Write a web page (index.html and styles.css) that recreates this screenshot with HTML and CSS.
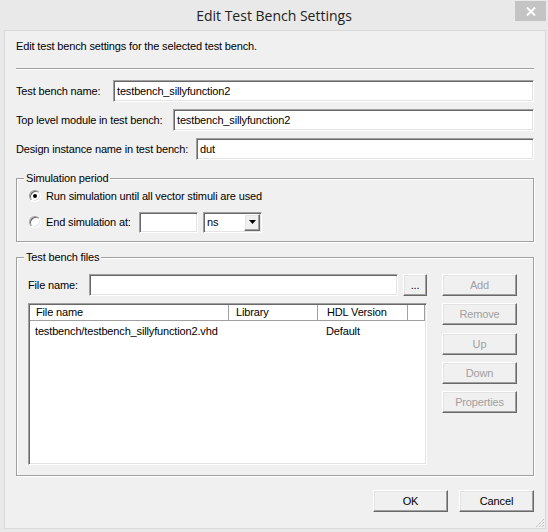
FILE: index.html
```html
<!DOCTYPE html>
<html>
<head>
<meta charset="utf-8">
<title>Edit Test Bench Settings</title>
<link rel="stylesheet" href="styles.css">
</head>
<body>
<div class="window">
  <div class="titlebar">
    <div></div>
    <div class="title">Edit Test Bench Settings</div>
    <div class="close"><svg width="10" height="9" viewBox="0 0 10 9"><path d="M1 0.5 L9 8.5 M9 0.5 L1 8.5" stroke="#fff" stroke-width="2"/></svg></div>
  </div>
  <div class="client">
    <p class="intro">Edit test bench settings for the selected test bench.</p>
    <div class="sep"></div>
    <div class="fields">
      <div class="row"><span class="lbl w1">Test bench name:</span><div class="input sunken">testbench_sillyfunction2</div></div>
      <div class="row"><span class="lbl w2">Top level module in test bench:</span><div class="input sunken">testbench_sillyfunction2</div></div>
      <div class="row"><span class="lbl w3">Design instance name in test bench:</span><div class="input sunken">dut</div></div>
    </div>

    <div class="group sim">
      <div class="group-title">Simulation period</div>
      <div class="sim-body">
        <div class="radio-row">
          <span class="radio sunken-round checked"></span>
          <span>Run simulation until all vector stimuli are used</span>
        </div>
        <div class="radio-row r2">
          <span class="radio sunken-round"></span>
          <span class="end-lbl">End simulation at:</span>
          <div class="input time sunken"></div>
          <div class="select sunken">
            <span class="sel-text">ns</span>
            <span class="drop raised"><svg width="7" height="4" viewBox="0 0 7 4"><path d="M0 0 H7 L3.5 4 Z" fill="#000"/></svg></span>
          </div>
        </div>
      </div>
    </div>

    <div class="group files">
      <div class="group-title">Test bench files</div>
      <div class="files-body">
        <div class="files-left">
          <div class="file-row">
            <span class="lbl fn">File name:</span>
            <div class="input sunken"></div>
            <div class="btn raised dots">...</div>
          </div>
          <div class="listview sunken">
            <div class="lv-header">
              <div class="hcell c1">File name</div>
              <div class="hcell c2">Library</div>
              <div class="hcell c3">HDL Version</div>
              <div class="hcell c4"></div>
            </div>
            <div class="lv-row">
              <div class="cell c1">testbench/testbench_sillyfunction2.vhd</div>
              <div class="cell c2"></div>
              <div class="cell c3">Default</div>
            </div>
          </div>
        </div>
        <div class="files-right">
          <div class="btn raised disabled">Add</div>
          <div class="btn raised disabled">Remove</div>
          <div class="btn raised disabled">Up</div>
          <div class="btn raised disabled">Down</div>
          <div class="btn raised disabled">Properties</div>
        </div>
      </div>
    </div>

    <div class="footer">
      <div class="btn raised dlg">OK</div>
      <div class="btn raised dlg">Cancel</div>
    </div>

    <div class="grip"><svg width="11" height="11" viewBox="0 0 11 11"><path d="M10 2 L2 10 M10 5 L5 10 M10 8 L8 10" stroke="#a8a8a8" stroke-width="1" stroke-dasharray="1 1"/></svg></div>
  </div>
</div>
</body>
</html>
```

FILE: styles.css
```css
* { box-sizing: border-box; }
html, body { margin: 0; padding: 0; }
body {
  width: 548px;
  height: 532px;
  overflow: hidden;
  background: #e9e9e9;
  font-family: "Liberation Sans", Arial, sans-serif;
  font-size: 11px;
  letter-spacing: -0.15px;
  color: #000;
}
.window { display: flex; flex-direction: column; height: 532px; }

.titlebar {
  height: 30px;
  display: grid;
  grid-template-columns: 1fr auto 1fr;
  align-items: start;
}
.title {
  font-family: "Open Sans", sans-serif;
  font-size: 14px;
  letter-spacing: 0;
  color: #222;
  line-height: 20px;
  padding-top: 6px;
}
.close {
  justify-self: end;
  width: 31px;
  height: 20px;
  margin: 1px 2px 0 0;
  background: #c4c4c4;
  display: flex;
  align-items: center;
  justify-content: center;
}

.client {
  position: relative;
  margin: 0 2px 3px 4px;
  height: 499px;
  border: 1px solid #d9d9d9;
  background: #f0f0f0;
  padding: 9px 11px 0 11px;
}
.intro { margin: 0; line-height: 13px; }
.sep {
  margin-top: 15px;
  height: 2px;
  border-top: 1px solid #a0a0a0;
  border-bottom: 1px solid #fff;
}
.fields { margin-top: 10px; }
.row { display: flex; align-items: center; height: 22px; }
.row + .row { margin-top: 7px; }
.lbl { flex: none; line-height: 13px; white-space: nowrap; }
.w1 { width: 97px; }
.w2 { width: 157px; }
.w3 { width: 180px; }

.sunken {
  background: #fff;
  border: 1px solid;
  border-color: #a0a0a0 #fff #fff #a0a0a0;
  box-shadow: inset 1px 1px #696969, inset -1px -1px #e3e3e3;
}
.raised {
  background: #f0f0f0;
  border: 1px solid;
  border-color: #fff #696969 #696969 #fff;
  box-shadow: inset -1px -1px #a0a0a0, inset 1px 1px #e3e3e3;
}
.input {
  flex: 1;
  height: 22px;
  padding: 0 3px;
  line-height: 20px;
  white-space: nowrap;
  overflow: hidden;
}

.group {
  border: 1px solid #a0a0a0;
  box-shadow: inset 1px 1px #fff, 1px 1px #fff;
}
.group-title {
  width: fit-content;
  margin: -7px 0 0 7px;
  padding: 0 2px;
  line-height: 13px;
  background: #f0f0f0;
}
.sim { margin-top: 18px; }
.sim-body { padding: 3px 0 8px 12px; }
.radio-row { display: flex; align-items: center; height: 16px; }
.radio-row.r2 { height: 22px; margin-top: 7px; }
.radio {
  flex: none;
  width: 12px;
  height: 12px;
  border-radius: 50%;
  margin-right: 5px;
  display: flex;
  align-items: center;
  justify-content: center;
}
.sunken-round {
  background: #fff;
  border: 1px solid;
  border-color: #a0a0a0 #fff #fff #a0a0a0;
  box-shadow: inset 1px 1px #696969, inset -1px -1px #e3e3e3;
}
.radio.checked::after {
  content: "";
  width: 4px;
  height: 4px;
  border-radius: 50%;
  background: #000;
}
.end-lbl { width: 93px; flex: none; }
.input.time { flex: none; width: 59px; height: 21px; }
.select {
  flex: none;
  width: 59px;
  height: 21px;
  margin-left: 5px;
  display: flex;
  align-items: stretch;
  padding: 1px;
}
.sel-text { flex: 1; padding-left: 2px; line-height: 17px; }
.drop {
  width: 16px;
  display: flex;
  align-items: center;
  justify-content: center;
}

.files { margin-top: 15px; }
.files-body {
  display: flex;
  gap: 15px;
  padding: 10px 16px 10px 11px;
}
.files-left { flex: 1; min-width: 0; }
.file-row { display: flex; align-items: center; height: 22px; }
.fn { width: 61px; }
.dots { flex: none; width: 24px; height: 22px; margin-left: 5px; text-align: center; line-height: 18px; }
.files-right {
  flex: none;
  width: 75px;
  display: flex;
  flex-direction: column;
  gap: 7.25px;
}
.btn {
  height: 22px;
  text-align: center;
  line-height: 20px;
  white-space: nowrap;
}
.btn.disabled { color: #a0a0a0; }

.listview {
  margin-top: 7px;
  height: 162px;
  padding: 1px;
  overflow: hidden;
}
.lv-header { display: flex; height: 16px; }
.hcell {
  flex: none;
  height: 16px;
  line-height: 15px;
  padding-left: 6px;
  background: #fff;
  border-right: 1px solid #a0a0a0;
  border-bottom: 1px solid #a0a0a0;
  box-shadow: inset 1px 1px #fff;
  white-space: nowrap;
}
.c1 { width: 199px; }
.c2 { width: 89px; }
.c3 { width: 90px; }
.c4 { width: 17px; }
.hcell.c2 { padding-left: 7px; }
.hcell.c3 { padding-left: 9px; }
.lv-row { display: flex; padding-top: 4px; line-height: 13px; }
.cell { flex: none; white-space: nowrap; }
.cell.c1 { padding-left: 5px; }
.cell.c3 { padding-left: 8px; }

.footer {
  margin-top: 14px;
  display: flex;
  justify-content: flex-end;
  gap: 11px;
}
.btn.dlg { width: 75px; }

.grip {
  position: absolute;
  right: 0;
  bottom: 0;
  width: 11px;
  height: 11px;
}
```
